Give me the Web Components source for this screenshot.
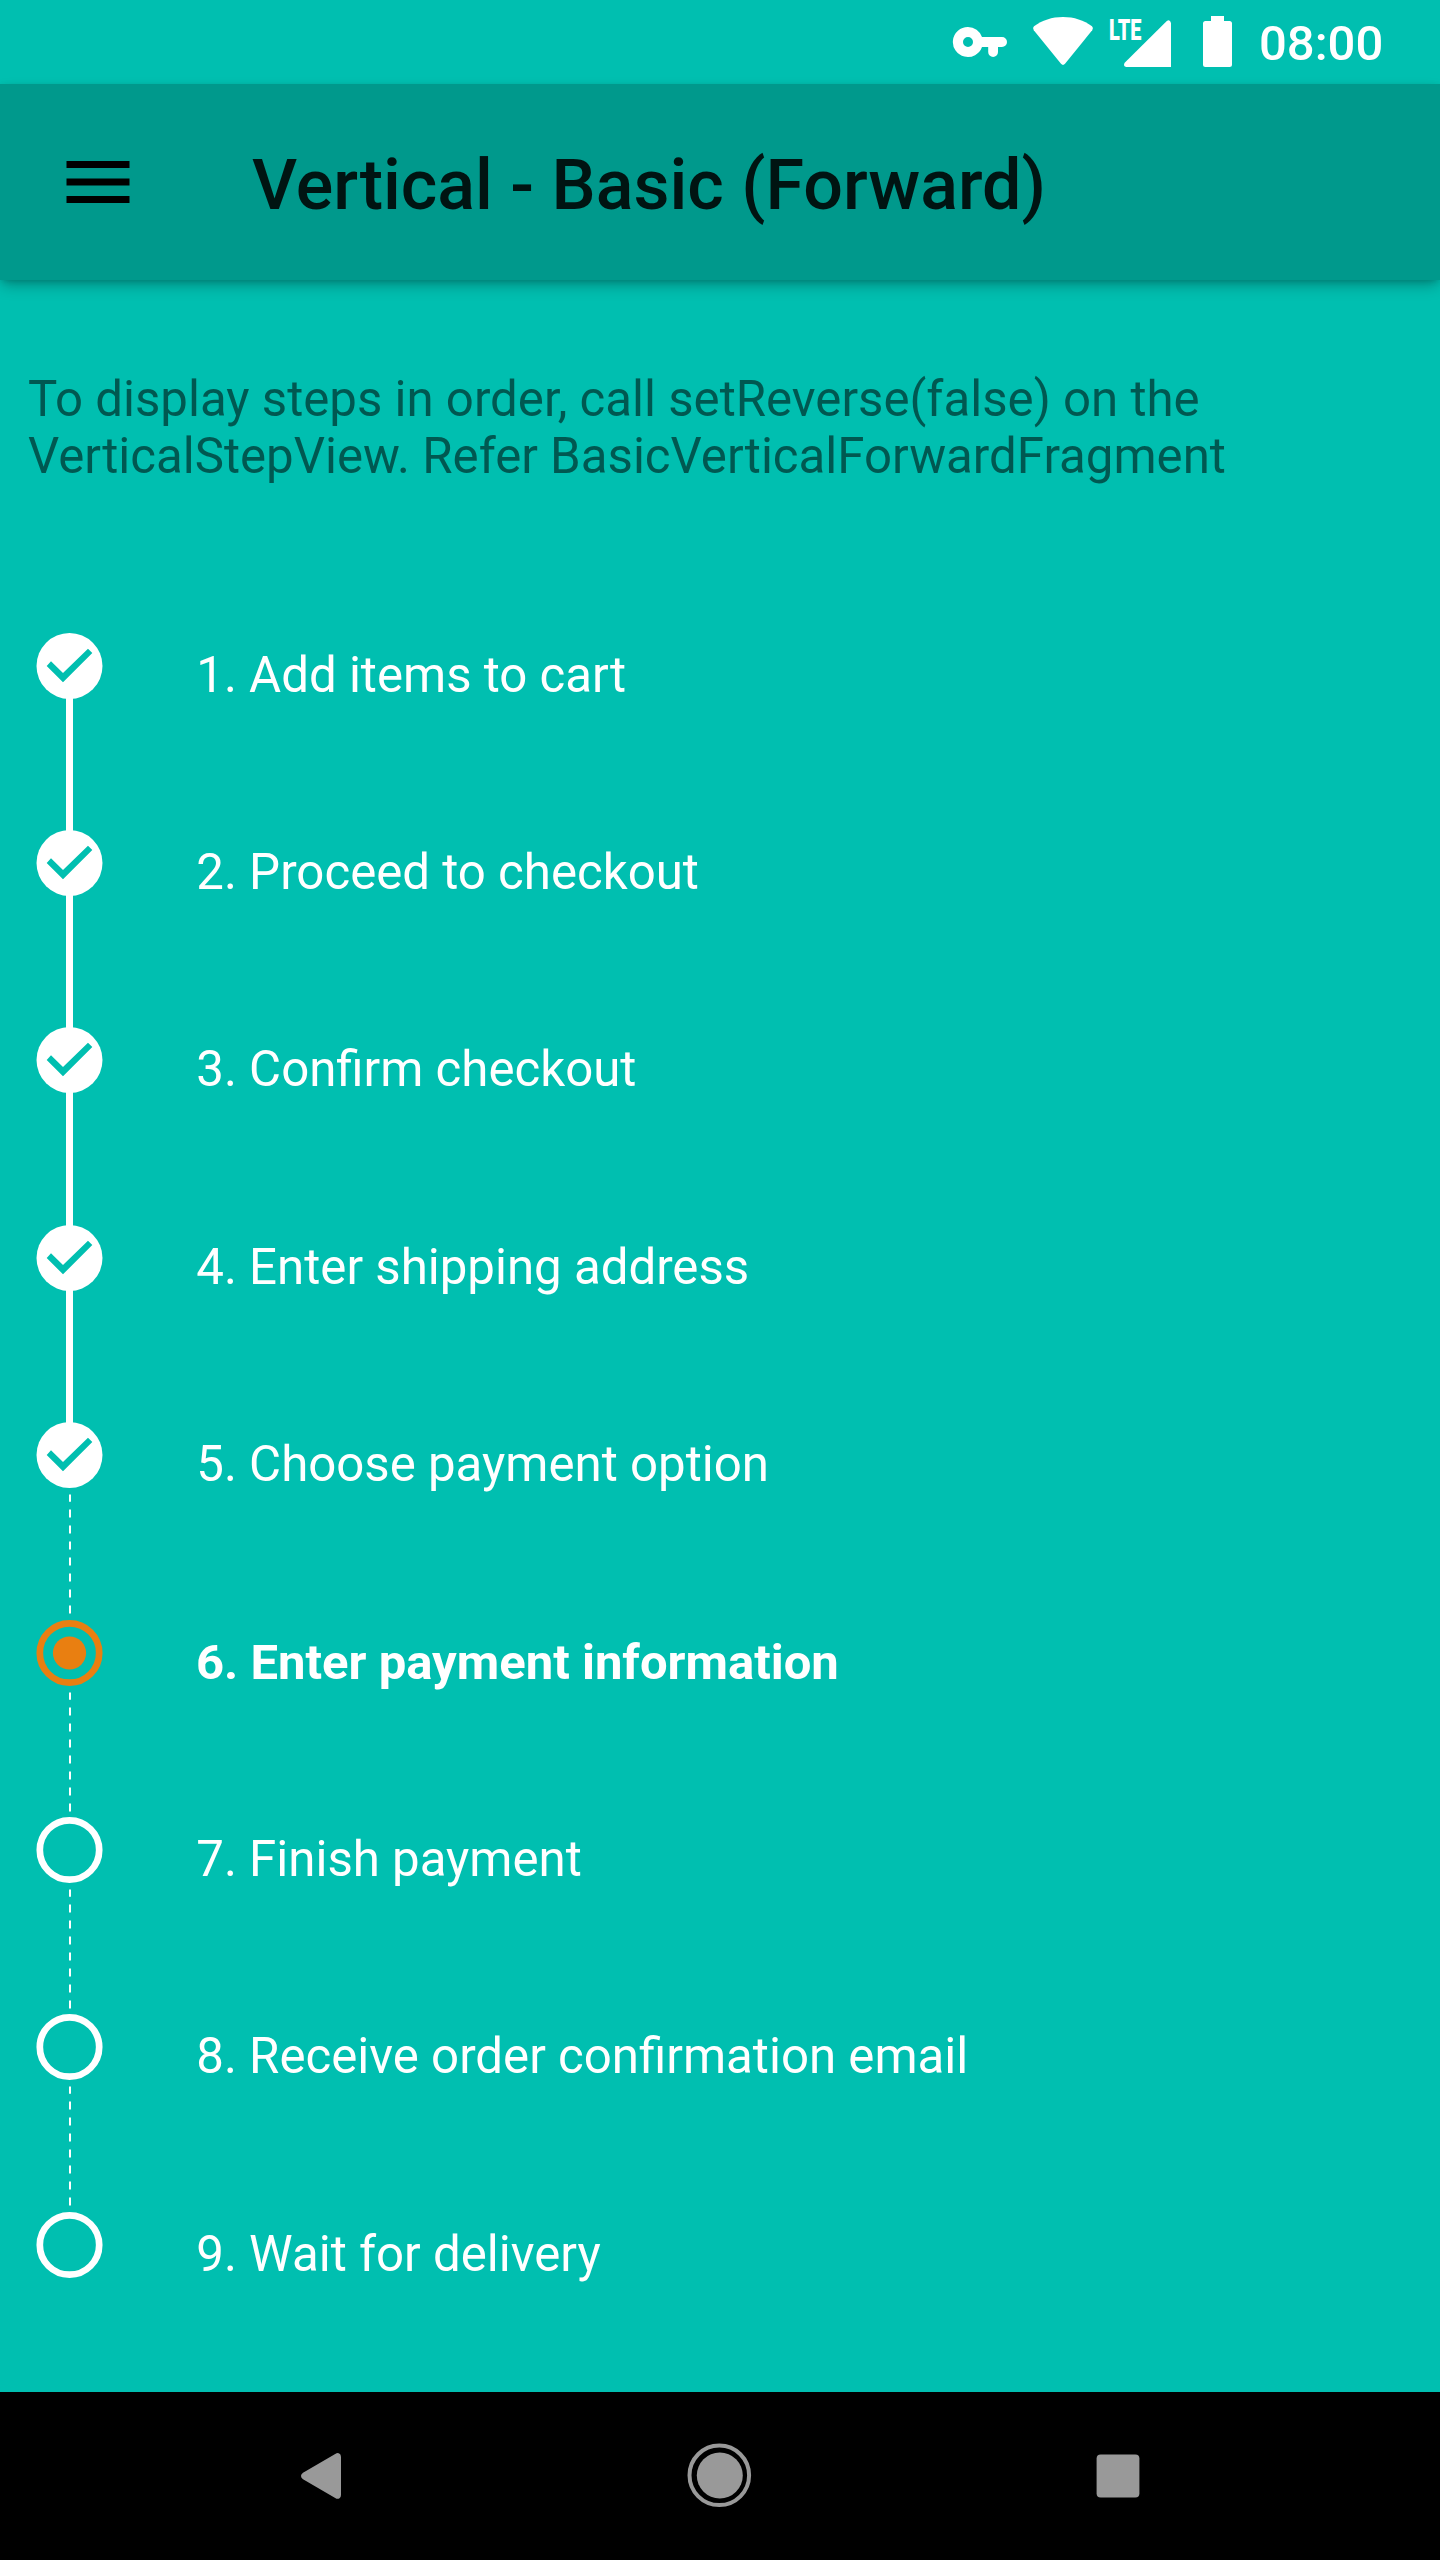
<!DOCTYPE html>
<html lang="en">
<head>
<meta charset="utf-8">
<title>Vertical - Basic (Forward)</title>
<style>
html,body{margin:0;padding:0}
body{width:1440px;height:2560px;overflow:hidden;background:#00bfb0;font-family:Roboto,"Liberation Sans",sans-serif}
</style>
</head>
<body>
<demo-app></demo-app>
<script>
function define(name, html, setup) {
  customElements.define(name, class extends HTMLElement {
    constructor() {
      super();
      this.attachShadow({ mode: 'open' });
    }
    connectedCallback() {
      const t = document.createElement('template');
      t.innerHTML = html;
      this.shadowRoot.replaceChildren(t.content.cloneNode(true));
      if (setup) setup(this, this.shadowRoot);
    }
  });
}

define('status-bar', `
<style>
:host{display:flex;height:84px;box-sizing:border-box;justify-content:flex-end;align-items:flex-start;padding-right:56px;color:#fff}
svg{display:block;flex:none;fill:#fff}
.clock{font-size:49px;font-weight:500;line-height:57px;margin-top:15px;width:125px;white-space:nowrap}
.gap1{margin-right:24px}.gap2{margin-right:14px}.gap3{margin-right:30px}.gap4{margin-right:26px}
</style>
<svg class="gap1" width="56" height="84" viewBox="952 0 56 84"><path fill-rule="evenodd" d="M968 27A15 15 0 0 1 982 37H1002A5 5 0 0 1 1002 47H998V52A4.9 4.9 0 0 1 988.2 52V47H982A15 15 0 1 1 968 27ZM968 37A5 5 0 1 0 968 47A5 5 0 1 0 968 37Z"/></svg>
<svg class="gap2" width="62" height="84" viewBox="1032 0 62 84"><path d="M1063 17C1052 17 1042 20.3 1034 26.3Q1032.2 28 1033.8 30.3L1061 63.8Q1063 66 1065 63.8L1092.2 30.3Q1093.8 28 1092 26.3C1084 20.3 1074 17 1063 17Z"/></svg>
<svg class="gap3" width="64" height="84" viewBox="1108 0 64 84"><path d="M1171 23V67H1126.3Q1122.7 66.2 1124.7 62.8L1166.8 21Q1169.8 18.6 1171 23Z"/><text x="1109" y="39.5" font-family="Roboto" font-weight="900" font-size="30" textLength="32.5" lengthAdjust="spacingAndGlyphs">LTE</text></svg>
<svg class="gap4" width="31" height="84" viewBox="1202 0 31 84"><path d="M1211 16H1224V21H1229.5Q1232 21 1232 23.5V64.5Q1232 67 1229.5 67H1205.5Q1203 67 1203 64.5V23.5Q1203 21 1205.5 21H1211Z"/></svg>
<div class="clock"><slot></slot></div>`);

define('app-toolbar', `
<style>
:host{display:flex;height:196px;align-items:center;background:#00998c;position:relative;box-shadow:0 7px 14px -2px rgba(0,0,0,.27),0 2px 7px -2px rgba(0,0,0,.22)}
svg{display:block;margin-left:56px;flex:none}
h1{margin:0 0 0 112px;font-size:70px;font-weight:500;line-height:82px;color:rgba(0,0,0,.87);white-space:nowrap;padding-top:5px}
</style>
<svg width="84" height="84" viewBox="0 0 24 24"><path d="M3 6h18v2H3zM3 11h18v2H3zM3 16h18v2H3z"/></svg>
<h1><slot></slot></h1>`);

define('step-item', `
<style>
:host{display:flex;height:197.4px;color:#fff}
svg{display:block;flex:none;overflow:visible;fill:#fff}
.label{margin-left:57.3px;padding-top:14px;font-size:49.2px;line-height:57px;white-space:nowrap}
:host([state=current]) .label{font-weight:700;font-size:49px;margin-left:57px}
.dash{stroke:#fff;stroke-width:2;fill:none}
.ring{fill:none;stroke:#fff;stroke-width:6.7}
.now .ring{stroke:#e97f11}
.now .dot{fill:#e97f11}
</style>
<svg width="139" height="197.4" viewBox="0 -33 139 197.4"></svg>
<div class="label"><slot></slot></div>`, (host, root) => {
  const state = host.getAttribute('state');
  const line = host.getAttribute('line');
  let s = '';
  if (line === 'solid') s += '<rect x="66" y="30" width="7" height="138"/>';
  if (line === 'dashed') s += '<path class="dash" d="M70 39.4v7.4"/><path class="dash" stroke-dasharray="8 8" d="M70 54.4v105"/>';
  if (state === 'done') s += '<circle cx="69.5" cy="0" r="33"/><path fill="#00bfb0" d="M51 -4.7L63 7L88 -17.3L92.3 -13L63 16.3L46.7 0Z"/>';
  else if (state === 'current') s += '<g class="now"><circle class="ring" cx="69.5" cy="0" r="29.7"/><circle class="dot" cx="69.5" cy="0" r="16.6"/></g>';
  else s += '<circle class="ring" cx="69.5" cy="0" r="29.7"/>';
  root.querySelector('svg').innerHTML = s;
});

define('step-view', `
<style>:host{display:flex;flex-direction:column;flex:none}</style><slot></slot>`);

define('nav-bar', `
<style>
:host{display:flex;flex:none;height:168px;background:#000;justify-content:center;gap:314px}
svg{display:block;flex:none;fill:#999}
</style>
<svg width="84" height="168" viewBox="280 2392 84 168"><path d="M335.2 2454.1Q337.3 2452.6 339.2 2453.4Q341 2454.2 341 2457V2495Q341 2497.8 339.2 2498.5Q337.3 2499.4 335.2 2498L303 2479.3Q301 2478 301 2476Q301 2474 303 2472.8Z"/></svg>
<svg width="84" height="168" viewBox="678 2392 84 168"><circle cx="719.3" cy="2475.3" r="29.8" fill="none" stroke="#999" stroke-width="4"/><circle cx="719.8" cy="2475.5" r="23"/></svg>
<svg width="84" height="168" viewBox="1076 2392 84 168"><rect x="1096.6" y="2454.6" width="42.8" height="42.8" rx="4"/></svg>`);

define('demo-app', `
<style>
:host{display:flex;flex-direction:column;width:1440px;height:2560px;background:#00bfb0}
main{flex:1;min-height:0;display:flex;flex-direction:column;overflow:hidden}
p{flex:none;box-sizing:border-box;margin:0;padding:91px 28px 0;font-size:49.2px;line-height:57px;color:rgba(0,0,0,.54);height:352.7px}
</style>
<status-bar>08:00</status-bar>
<app-toolbar>Vertical - Basic (Forward)</app-toolbar>
<main>
<p>To display steps in order, call setReverse(false) on the<br>VerticalStepView. Refer BasicVerticalForwardFragment</p>
<step-view>
<step-item state="done" line="solid">1. Add items to cart</step-item>
<step-item state="done" line="solid">2. Proceed to checkout</step-item>
<step-item state="done" line="solid">3. Confirm checkout</step-item>
<step-item state="done" line="solid">4. Enter shipping address</step-item>
<step-item state="done" line="dashed">5. Choose payment option</step-item>
<step-item state="current" line="dashed">6. Enter payment information</step-item>
<step-item state="todo" line="dashed">7. Finish payment</step-item>
<step-item state="todo" line="dashed">8. Receive order confirmation email</step-item>
<step-item state="todo">9. Wait for delivery</step-item>
</step-view>
</main>
<nav-bar></nav-bar>`);
</script>
</body>
</html>
